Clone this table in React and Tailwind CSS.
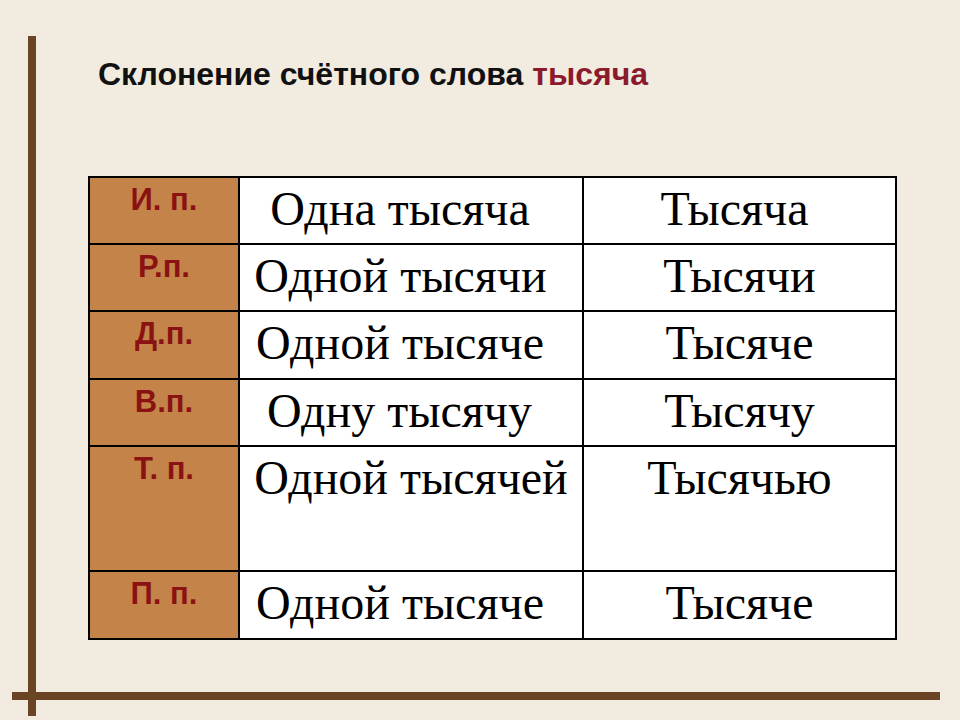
export default function App() {
  const rows = [
    { label: "И. п.", a: "Одна тысяча", b: "Тысяча", h: "h-[67px]", pa: "pr-[22px]", pb: "pr-[10px]" },
    { label: "Р.п.", a: "Одной тысячи", b: "Тысячи", h: "h-[67px]", pa: "pr-[21px]", pb: "pr-0" },
    { label: "Д.п.", a: "Одной тысяче", b: "Тысяче", h: "h-[68px]", pa: "pr-[22px]", pb: "pr-0" },
    { label: "В.п.", a: "Одну тысячу", b: "Тысячу", h: "h-[67px]", pa: "pr-[23px]", pb: "pr-0" },
    { label: "Т. п.", a: "Одной тысячей", b: "Тысячью", h: "h-[125px]", pa: "pr-0", pb: "pr-0" },
    { label: "П. п.", a: "Одной тысяче", b: "Тысяче", h: "h-[68px]", pa: "pr-[22px]", pb: "pr-0" },
  ];
  return (
    <div className="relative w-[960px] h-[720px] overflow-hidden bg-[#f2ebe0]">
      <div className="absolute left-[28px] top-[36px] w-[8px] h-[680px] bg-[#6b4426]" />
      <div className="absolute left-[12px] top-[692px] w-[928px] h-[8px] bg-[#6b4426]" />
      <div className="relative flex flex-col pt-[56px]">
        <h1
          className="ml-[98px] text-[32px] leading-[36px] font-bold text-[#111111]"
          style={{ fontFamily: '"Liberation Sans", Arial, sans-serif' }}
        >
          Склонение счётного слова <span className="text-[#8a1a2c]">тысяча</span>
        </h1>
        <table className="ml-[88px] mt-[84px] w-[807px] table-fixed border-collapse border-2 border-black">
          <colgroup>
            <col className="w-[150px]" />
            <col className="w-[344px]" />
            <col className="w-[313px]" />
          </colgroup>
          <tbody>
            {rows.map((r) => (
              <tr key={r.label} className={r.h}>
                <td
                  className="border-2 border-black bg-[#c48449] align-top text-center pt-[7px] text-[31px] leading-[30px] font-bold text-[#8b1212]"
                  style={{ fontFamily: '"Liberation Sans", Arial, sans-serif' }}
                >
                  {r.label}
                </td>
                <td
                  className={`border-2 border-black bg-white align-top text-center pt-[5px] text-[48px] leading-[52px] text-black whitespace-nowrap ${r.pa}`}
                  style={{ fontFamily: '"Liberation Serif", "Times New Roman", serif' }}
                >
                  {r.a}
                </td>
                <td
                  className={`border-2 border-black bg-white align-top text-center pt-[5px] text-[48px] leading-[52px] text-black whitespace-nowrap ${r.pb}`}
                  style={{ fontFamily: '"Liberation Serif", "Times New Roman", serif' }}
                >
                  {r.b}
                </td>
              </tr>
            ))}
          </tbody>
        </table>
      </div>
    </div>
  );
}
